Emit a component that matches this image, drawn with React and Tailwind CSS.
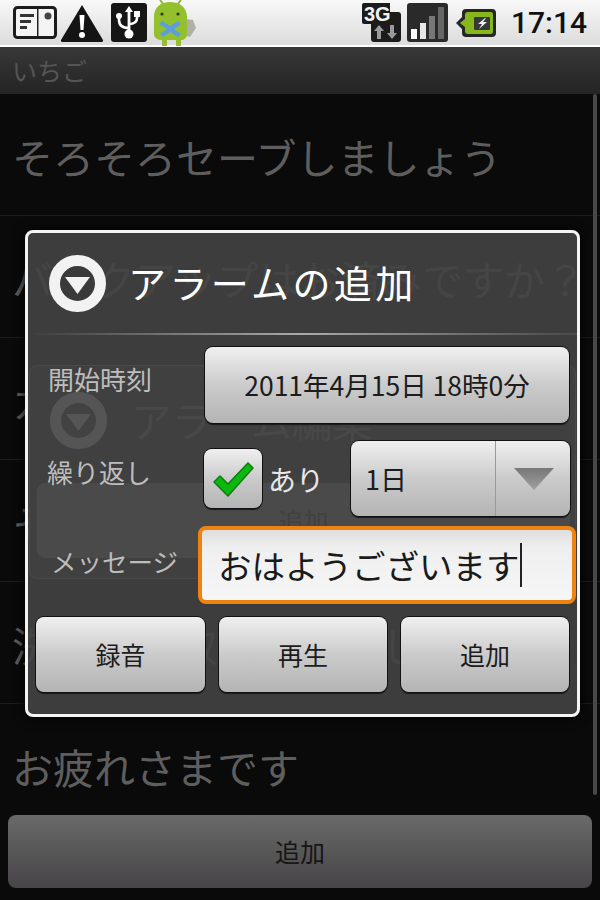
import React from "react";

const FONT = { fontFamily: '"Noto Sans CJK JP", "Noto Sans", sans-serif' };

const btnGrad =
  "bg-gradient-to-b from-[#f0f0f0] via-[#cbcbcb] via-50% to-[#b4b4b4] ring-1 ring-[#111] shadow-[0_2px_1px_#1a1a1a]";

const rows = [
  "そろそろセーブしましょう",
  "バックアップはお済みですか？",
  "カラオケに行きましょう",
  "そろそろ休憩しませんか",
  "洗濯物を取り込みましょう",
  "お疲れさまです",
];

const CardIcon = () => (
  <svg width="44" height="33" viewBox="0 0 44 33">
    <rect x="1.5" y="1.5" width="41" height="30" rx="3" fill="#f4f4f4" stroke="#1c1c1c" strokeWidth="3" />
    <path d="M7 8h14v3H7zM7 14h11v3H7zM7 20h7v3H7z" fill="#333" />
    <rect x="24" y="3" width="1.5" height="27" fill="#222" />
    <circle cx="35" cy="10" r="3.5" fill="#444" />
  </svg>
);

const WarnIcon = () => (
  <svg width="44" height="38" viewBox="0 0 44 38">
    <path d="M22 1 L43 36 Q43.5 38 41 38 H3 Q.5 38 1 36 Z" fill="#141414" />
    <path d="M19.5 11h5l-1 15h-3z" fill="#fff" />
    <circle cx="22" cy="31" r="3" fill="#fff" />
  </svg>
);

const UsbIcon = () => (
  <svg width="36" height="39" viewBox="0 0 36 39">
    <rect width="36" height="39" rx="3" fill="#161616" />
    <path d="M18 3l4 6h-2.6v20h-2.8V9H14z" fill="#fff" />
    <path d="M18 25c-7 0-10-3-10-8v-3" fill="none" stroke="#fff" strokeWidth="2.6" />
    <path d="M18 21c5 0 8-2 8-6v-2" fill="none" stroke="#fff" strokeWidth="2.6" />
    <circle cx="8" cy="13" r="3" fill="#fff" />
    <rect x="23" y="8" width="6" height="6" fill="#fff" />
    <circle cx="18" cy="31" r="4.5" fill="#fff" />
  </svg>
);

const DroidIcon = () => (
  <svg width="44" height="47" viewBox="0 0 44 47">
    <path d="M33 20l7 1 3 8-6 9-4-1z" fill="#b0b0aa" />
    <path d="M7 1l4 5M28 1l-4 5" stroke="#8ab82a" strokeWidth="2" />
    <path d="M1 18C1 8 8 3 17 3s17 5 17 15v17c0 4-3 6-6 6v6h-5v-6h-9v6H9v-6c-4 0-8-2-8-6z" fill="#93c02c" />
    <circle cx="9" cy="15" r="1.6" fill="#2b3a10" />
    <circle cx="25" cy="15" r="1.6" fill="#2b3a10" />
    <path d="M6 25l8 5-7 5 3 3 7-5 8 5 3-3-7-5 7-5-3-3-8 5-8-5z" fill="#5a9de0" />
  </svg>
);

const ThreeGIcon = () => (
  <svg width="40" height="39" viewBox="0 0 40 39">
    <path d="M2 0h26v9h8q3 0 3 3v24q0 3-3 3H12q-3 0-3-3V21H2q-2 0-2-2V2q0-2 2-2z" fill="#1c1c1c" />
    <text x="2" y="18" fontSize="20" fontWeight="700" fill="#f2f2f2" fontFamily="Liberation Sans, sans-serif">3G</text>
    <path d="M17 22l5 6h-3v8h-4v-8h-3zM30 36l-5-6h3v-8h4v8h3z" fill="#9a9a9a" />
  </svg>
);

const SignalIcon = () => (
  <svg width="41" height="39" viewBox="0 0 41 39">
    <rect width="41" height="39" rx="3" fill="#2a2a2a" />
    <rect x="4" y="26" width="6" height="10" fill="#fff" />
    <rect x="13" y="20" width="6" height="16" fill="#e6e6e6" />
    <rect x="22" y="13" width="6" height="23" fill="#777" />
    <rect x="31" y="4" width="6" height="32" fill="#666" />
  </svg>
);

const BatteryIcon = () => (
  <svg width="40" height="30" viewBox="0 0 40 30">
    <path d="M0 15l6-6V5q0-4 4-4h26q4 0 4 4v20q0 4-4 4H10q-4 0-4-4v-4z" fill="#262626" />
    <path d="M4 15l5-4V7q0-3 3-3h23q2 0 2 3v16q0 3-2 3H12q-3 0-3-3v-4z" fill="#86b81c" />
    <rect x="18" y="9" width="16" height="13" rx="1" fill="#383838" />
    <path d="M29 10l-7 6h4l-3 5 8-7h-4l3-4z" fill="#eee" />
  </svg>
);

const DialogIcon = ({ ring = "#f2f2f2", inner = "#3a3a3a" }) => (
  <svg width="57" height="57" viewBox="0 0 57 57">
    <circle cx="28.5" cy="28.5" r="23" fill={inner} stroke={ring} strokeWidth="11" />
    <path d="M16 22h25L28.5 39z" fill={ring} />
  </svg>
);

const Button = ({ children, className }) => (
  <div className={`flex items-center justify-center rounded-lg text-[#1c1c1c] ${btnGrad} ${className}`}>
    {children}
  </div>
);

export default function App() {
  return (
    <div className="relative flex h-[900px] w-[600px] flex-col overflow-hidden bg-[#0a0a0a]" style={FONT}>
      {/* status bar */}
      <div className="flex h-[47px] shrink-0 items-center border-b-2 border-white bg-gradient-to-b from-[#f8f8f8] to-[#dcdcdc] pl-[13px] pr-[13px]">
        <CardIcon />
        <div className="ml-[3px]"><WarnIcon /></div>
        <div className="ml-[7px]"><UsbIcon /></div>
        <div className="ml-[6px]"><DroidIcon /></div>
        <div className="ml-auto"><ThreeGIcon /></div>
        <div className="ml-[5px]"><SignalIcon /></div>
        <div className="ml-[8px]"><BatteryIcon /></div>
        <span className="ml-[15px] text-[30px] leading-none font-medium text-[#111]" style={{ fontFamily: "Roboto, sans-serif" }}>
          17:14
        </span>
      </div>

      {/* title bar */}
      <div className="flex h-[47px] shrink-0 items-center bg-gradient-to-b from-[#383838] to-[#242424] pl-[12px] text-[25px] text-[#555]">
        いちご
      </div>

      {/* list behind the dialog */}
      <div className="min-h-0 flex-1 overflow-hidden">
        {rows.map((r) => (
          <div key={r} className="flex h-[122px] items-center border-b border-[#1c1c1c] px-[12px] pt-[2px] text-[41px] leading-[60px] whitespace-nowrap text-[#5e5e5e]">
            {r}
          </div>
        ))}
      </div>

      {/* bottom button */}
      <div className="shrink-0 bg-[#0a0a0a] px-[8px] pt-[9px] pb-[12px]">
        <div className="flex h-[73px] items-center justify-center rounded-lg bg-gradient-to-b from-[#6a6a6a] to-[#474547] text-[25px] text-[#161616]">
          追加
        </div>
      </div>

      {/* scrollbar */}
      <div className="absolute top-[94px] left-[593px] h-[701px] w-[4px] rounded-sm bg-[#484848]" />

      {/* previous dialog still fading out */}
      <div className="absolute top-[365px] left-[29px] h-[214px] w-[547px] rounded-lg border border-[#888] bg-[#2a2a2a]">
        <div className="flex items-center pt-[26px] pl-[20px]">
          <DialogIcon ring="#ffffff" inner="#444" />
          <span className="ml-[24px] text-[40.5px] leading-none text-[#777]">アラーム編集</span>
        </div>
        <div className="absolute top-[117px] left-[7px] flex h-[75px] w-[533px] items-center justify-center rounded-lg bg-[#909090] text-[25px] text-[#333]">
          追加
        </div>
      </div>

      {/* dialog */}
      <div className="absolute top-[230px] left-[25px] flex h-[487px] w-[555px] flex-col rounded-lg border-[3px] border-[#f4f4f4] bg-[#424242]/90 shadow-[0_0_12px_#000]">
        <div className="flex h-[100px] shrink-0 items-center pl-[21px]">
          <DialogIcon />
          <span className="ml-[22px] pb-[3px] text-[38px] leading-none tracking-[3.4px] text-white">アラームの追加</span>
        </div>
        <div className="h-[2px] shrink-0 bg-gradient-to-r from-transparent via-[#aaa] to-[#4a4a4a]" />

        <div className="mt-[12px] flex h-[76px] shrink-0 items-center">
          <span className="ml-[20px] w-[157px] pb-[13px] text-[26px] leading-none text-[#bdbdbd]">開始時刻</span>
          <Button className="h-[76px] w-[364px] text-[26.5px]">2011年4月15日 18時0分</Button>
        </div>

        <div className="mt-[18px] flex h-[75px] shrink-0 items-center">
          <span className="ml-[19px] w-[157px] pb-[14px] text-[26px] leading-none text-[#bdbdbd]">繰り返し</span>
          <Button className="h-[59px] w-[58px]">
            <svg width="46" height="40" viewBox="0 0 46 40">
              <path d="M4 23l6-6 8 8L38 4l5 5-25 28z" fill="#0bb80f" stroke="#0a7d0d" strokeWidth="1.5" strokeLinejoin="round" />
            </svg>
          </Button>
          <span className="ml-[6px] w-[83px] text-[28px] leading-none text-[#e8e8e8]">あり</span>
          <div className={`flex h-[75px] w-[219px] items-center rounded-lg text-[#1c1c1c] ${btnGrad}`}>
            <span className="ml-[14px] w-[130px] text-[27px] leading-none">1日</span>
            <div className="h-full w-[1px] bg-[#999]" />
            <svg className="ml-[17px]" width="42" height="24" viewBox="0 0 42 24">
              <defs>
                <linearGradient id="spin" x1="0" y1="0" x2="0" y2="1">
                  <stop offset="0" stopColor="#777" />
                  <stop offset="1" stopColor="#a0a0a0" />
                </linearGradient>
              </defs>
              <path d="M1 1h40L21 23z" fill="url(#spin)" />
            </svg>
          </div>
        </div>

        <div className="mt-[10px] flex h-[78px] shrink-0 items-center">
          <span className="ml-[23px] w-[147px] pb-[8px] text-[25.5px] leading-none text-[#bdbdbd]">メッセージ</span>
          <div className="flex h-[78px] w-[378px] items-center rounded-lg border-[4px] border-[#f0820f] bg-gradient-to-b from-[#dedede] via-[#efefef] via-25% to-[#f6f6f6] pl-[16px]">
            <span className="text-[33.5px] leading-none text-[#1a1a1a]">おはようございます</span>
            <div className="h-[44px] w-[2px] bg-[#222]" />
          </div>
        </div>

        <div className="mt-[13px] ml-[8px] flex shrink-0 gap-[14px]">
          <Button className="h-[75px] w-[169px] text-[25px]">録音</Button>
          <Button className="h-[75px] w-[168px] text-[25px]">再生</Button>
          <Button className="h-[75px] w-[168px] text-[25px]">追加</Button>
        </div>
      </div>
    </div>
  );
}
